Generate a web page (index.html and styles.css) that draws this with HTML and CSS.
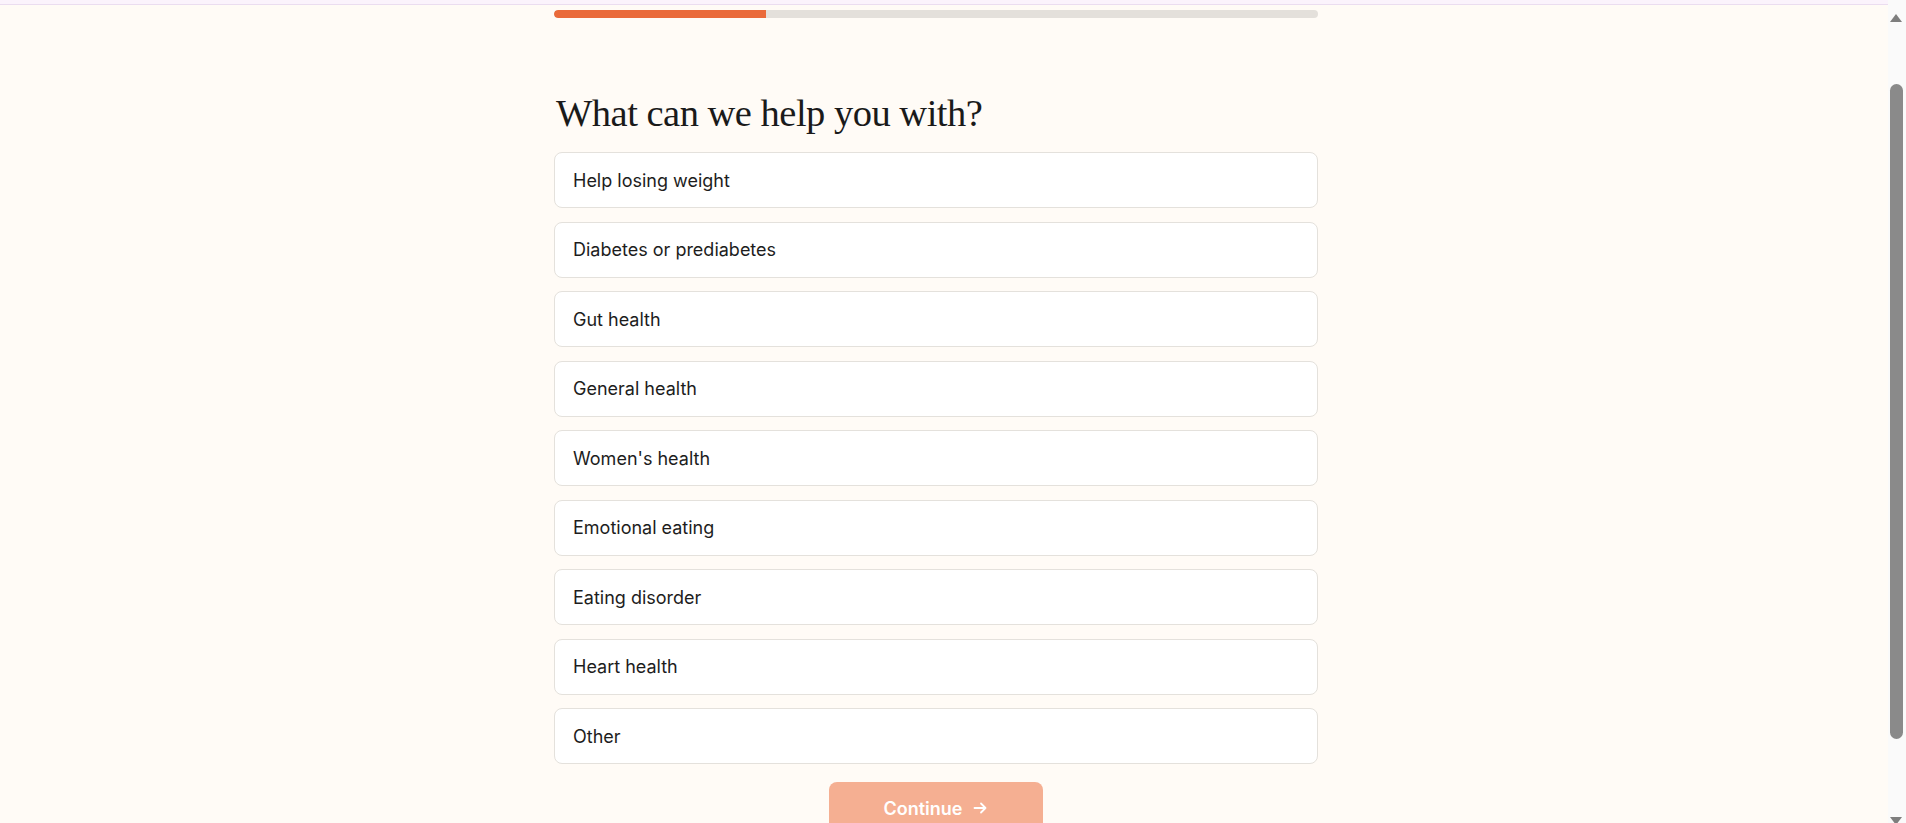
FILE: index.html
```html
<!DOCTYPE html>
<html lang="en">
<head>
    <meta charset="UTF-8" />
    <title>What can we help you with?</title>
    <link rel="stylesheet" href="styles.css">
</head>
<body>
    <div class="dev-strip"></div>

    <div class="page">
        <div class="quiz">
            <div class="progress">
                <div class="progress-fill" style="width: 27.8%;"></div>
            </div>

            <h1 class="question">What can we help you with?</h1>

            <div class="options" id="options">
                <button class="option">Help losing weight</button>
                <button class="option">Diabetes or prediabetes</button>
                <button class="option">Gut health</button>
                <button class="option">General health</button>
                <button class="option">Women's health</button>
                <button class="option">Emotional eating</button>
                <button class="option">Eating disorder</button>
                <button class="option">Heart health</button>
                <button class="option">Other</button>
            </div>

            <button class="continue-btn" disabled>
                Continue
                <svg width="16" height="16" viewBox="0 0 16 16" fill="none" stroke="currentColor" stroke-width="1.8" stroke-linecap="round" stroke-linejoin="round">
                    <path d="M2.5 8h11M9 3.5 13.5 8 9 12.5" />
                </svg>
            </button>
        </div>
    </div>

    <!-- window scrollbar as it shows in the capture -->
    <div class="fake-scrollbar" aria-hidden="true">
        <span class="sb-arrow sb-up"></span>
        <span class="sb-thumb"></span>
        <span class="sb-arrow sb-down"></span>
    </div>

    <script>
        window.addEventListener('load', () => {
            window.scrollTo(0, 84);
        });
        window.scrollTo(0, 84);
    </script>
</body>
</html>
```

FILE: styles.css
```css
html {
    background-color: #FFFBF6;
}
body {
    margin: 0;
    background-color: #FFFBF6;
    font-family: Inter, "Noto Sans", sans-serif;
    color: #1d1d1d;
}
.dev-strip {
    position: fixed;
    top: 0;
    left: 0;
    right: 0;
    height: 4px;
    background-color: #FBF3FC;
    border-bottom: 1px solid #EBDDF0;
    z-index: 2;
}
.page {
    margin-right: 34px;
}
.quiz {
    width: 764px;
    margin: 0 auto;
    padding: 94px 0 71px;
}
.progress {
    height: 8px;
    border-radius: 4px;
    background-color: #E4E0DB;
    overflow: hidden;
}
.progress-fill {
    height: 100%;
    background-color: #EA6A3A;
    border-radius: 4px 0 0 4px;
}
.question {
    font-family: "Liberation Serif", serif;
    font-weight: 400;
    font-size: 38.5px;
    line-height: 48px;
    letter-spacing: -0.5px;
    color: #1a1a1a;
    margin: 71px 0 15px 2px;
}
.options {
    display: flex;
    flex-direction: column;
    gap: 13.5px;
}
.option {
    display: flex;
    align-items: center;
    height: 56px;
    padding: 0 18px;
    background-color: #fff;
    border: 1px solid #E4E1DC;
    border-radius: 8px;
    font-family: Inter, "Noto Sans", sans-serif;
    font-size: 18px;
    color: #1d1d1d;
    text-align: left;
    cursor: pointer;
}
.option:hover {
    border-color: #cfcac4;
}
.continue-btn {
    display: flex;
    align-items: center;
    justify-content: center;
    gap: 10px;
    width: 214px;
    height: 52px;
    margin: 18px auto 0;
    background-color: #F5AF92;
    color: #fff;
    border: none;
    border-radius: 8px;
    font-family: Inter, "Noto Sans", sans-serif;
    font-size: 18px;
    font-weight: 600;
}
.fake-scrollbar {
    position: fixed;
    top: 0;
    right: 0;
    bottom: 0;
    width: 18px;
    background-color: #FAFAFA;
    z-index: 3;
}
.sb-thumb {
    position: absolute;
    top: 84px;
    left: 2px;
    width: 13px;
    height: 655px;
    border-radius: 7px;
    background-color: #8A8A8A;
}
.sb-arrow {
    position: absolute;
    left: 2px;
    width: 0;
    height: 0;
    border-left: 6.5px solid transparent;
    border-right: 6.5px solid transparent;
}
.sb-up {
    top: 14px;
    border-bottom: 8px solid #7E7E7E;
}
.sb-down {
    top: 817px;
    border-top: 8px solid #7E7E7E;
}
```
